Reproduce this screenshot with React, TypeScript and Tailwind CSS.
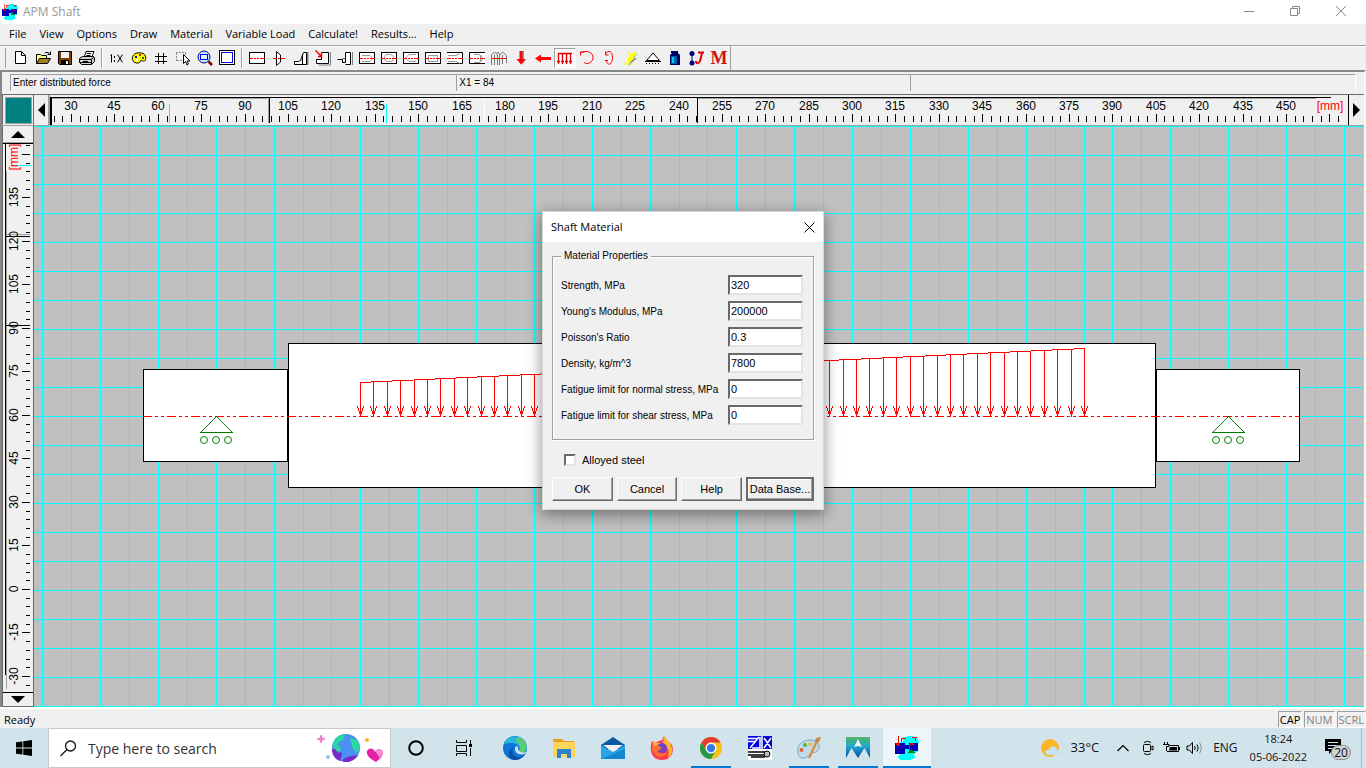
import { useState } from "react";
import type { ReactNode } from "react";
import clsx from "clsx";

const PX_PER_MM_X = 2.8925;
const PX_PER_MM_Y = 2.9;

const range = (from: number, to: number, step: number): number[] => {
  const out: number[] = [];
  for (let v = from; v <= to; v += step) {
    out.push(v);
  }
  return out;
};

const canvasX = (mm: number) => Math.round(8.2 + (mm - 20) * PX_PER_MM_X);
const canvasY = (mm: number) => Math.round(289.9 - (mm - 60) * PX_PER_MM_Y);

interface ToolIcon {
  name: string;
  art: ReactNode;
  pressed?: boolean;
}

const axis = <path d="M0 8h4v1H0zM5 8h2v1H5zM8 8h2v1H8zM11 8h5v1h-5z" fill="#f00" />;

const frame = (
  <rect x="0.5" y="2.5" width="15" height="11" fill="#fff" stroke="#000" />
);

const fileTools: ToolIcon[] = [
  {
    name: "New",
    art: <path d="M2.5 1.5h6l4 4v8h-10zM8.5 1.5v4h4" fill="#fff" stroke="#000" />,
  },
  {
    name: "Open",
    art: (
      <>
        <path d="M1.5 13.5v-9h4l1 1h5v3" fill="#ffff80" stroke="#000" />
        <path d="M1.5 13.5l3-5h11l-3 5z" fill="#a08020" stroke="#000" />
        <path d="M9.5 3.5l1-1h3l1 2M12.5 4.5h3v-3" fill="none" stroke="#000" />
      </>
    ),
  },
  {
    name: "Save",
    art: (
      <>
        <path d="M1.5 1.5h13v13h-12l-1-1z" fill="#804000" stroke="#000" />
        <rect x="4" y="2" width="8" height="6" fill="#f0f0f0" />
        <rect x="4" y="10" width="8" height="4" fill="#000" />
        <rect x="9" y="11" width="2" height="3" fill="#f0f0f0" />
      </>
    ),
  },
  {
    name: "Print",
    art: (
      <>
        <path d="M5.5 6.5l1.5-5h8l-2 5" fill="#fff" stroke="#000" />
        <path d="M8 3.5h4M7.5 5.5h4" stroke="#000" />
        <path d="M0.5 8.5l3-2h11l1 1v4l-3 3h-10l-2-2z" fill="#d0d0d0" stroke="#000" />
        <path d="M1 9.5h11l3-2M1 12.5h11M12.5 9.5v5M4 11.5h5" fill="none" stroke="#000" />
      </>
    ),
  },
];

const viewTools: ToolIcon[] = [
  {
    name: "Scale 1:X",
    art: (
      <path
        d="M1.5 5.5l1-1v8M5.5 6v2M5.5 10v2M8.5 4.5l5 8M13.5 4.5l-5 8"
        fill="none"
        stroke="#000"
      />
    ),
  },
  {
    name: "Colors",
    art: (
      <>
        <path
          d="M1.5 9.5c-1-5 4-7.5 8-6.5 4 0 6 3 5 6.5-1 3-3 1-4.5 1s0 2-2.5 2.5-5.5-1-6-3.5z"
          fill="#ffff00"
          stroke="#000"
        />
        <rect x="4" y="6" width="2" height="2" fill="#00f" />
        <rect x="8" y="4" width="2" height="2" fill="#f00" />
        <rect x="11" y="7" width="2" height="2" fill="#008000" />
        <rect x="5" y="9" width="2" height="2" fill="#fff" />
      </>
    ),
  },
  {
    name: "Grid",
    art: <path d="M5.5 3v11M10.5 3v11M2 6.5h12M2 11.5h12" stroke="#000" />,
  },
  {
    name: "Select",
    art: (
      <>
        <path d="M1 2.5h10M1.5 3v8M2 10.5h5M10.5 3v3" stroke="#909090" strokeDasharray="2 1" />
        <path d="M8.5 4.5v9l2-2 1.5 3.5 1.5-1-1.5-3h3z" fill="#fff" stroke="#000" />
      </>
    ),
  },
  {
    name: "Zoom window",
    art: (
      <>
        <circle cx="7" cy="7" r="6" fill="#c0e8ff" stroke="#000080" />
        <rect x="3.5" y="4.5" width="7" height="5" fill="#e0f0ff" stroke="#00f" />
        <path d="M11.5 11.5l3.5 3.5" stroke="#800000" strokeWidth="2.5" />
      </>
    ),
  },
  {
    name: "Zoom all",
    art: (
      <>
        <rect x="0.5" y="0.5" width="15" height="14" fill="#fff" stroke="#000" />
        <rect x="2.5" y="2.5" width="11" height="10" fill="#fff" stroke="#00f" />
      </>
    ),
  },
];

const drawTools: ToolIcon[] = [
  {
    name: "Cylinder",
    art: (
      <>
        {frame}
        {axis}
      </>
    ),
  },
  {
    name: "Cone",
    art: (
      <>
        <path d="M5.5 1.5l4 3.5v7l-4 3.5z" fill="#fff" stroke="#000" />
        <path d="M2 8h4v1H2zM7 8h2v1H7zM10 8h4v1h-4z" fill="#f00" />
      </>
    ),
  },
  {
    name: "Fillet",
    art: (
      <>
        <path d="M14.5 2v13" stroke="#808080" strokeWidth="2" />
        <path d="M1.5 14.5v-3h4q3 0 3-4l2-5h3v12z" fill="#fff" stroke="#000" />
        <path d="M9.5 4v11" stroke="#000" />
      </>
    ),
  },
  {
    name: "Chamfer",
    art: (
      <>
        <path d="M15.5 2v13h-12" stroke="#808080" fill="none" />
        <path d="M1.5 13.5v-4h5v-7h7v11z" fill="#fff" stroke="#000" />
        <path d="M0.5 0.5l6 6M3 6.5h3.5v-4" stroke="#f00" strokeWidth="1.5" fill="none" />
      </>
    ),
  },
  {
    name: "Groove",
    art: (
      <>
        <path d="M15.5 2v13" stroke="#808080" />
        <path d="M0.5 9.5h5v3h3v-10h5v12h-5" fill="#fff" stroke="#000" />
        <path d="M5 8.5h3" stroke="#808080" />
      </>
    ),
  },
  {
    name: "Keyway 1",
    art: (
      <>
        {frame}
        <path d="M3 5.5h8l2 2v2l-2 2H3" fill="none" stroke="#999" />
        {axis}
      </>
    ),
  },
  {
    name: "Keyway 2",
    art: (
      <>
        {frame}
        <rect x="3.5" y="4.5" width="9" height="7" rx="3" fill="none" stroke="#999" />
        {axis}
      </>
    ),
  },
  {
    name: "Keyway 3",
    art: (
      <>
        {frame}
        <path d="M13 4.5H6l-3 3v1l3 3h7" fill="none" stroke="#999" />
        {axis}
      </>
    ),
  },
  {
    name: "Keyway 4",
    art: (
      <>
        {frame}
        <rect x="3.5" y="5.5" width="9" height="6" fill="none" stroke="#999" />
        {axis}
      </>
    ),
  },
  {
    name: "Splines",
    art: (
      <>
        <path d="M0 2.5h15.5v11H0" fill="#fff" stroke="#000" />
        <path d="M1 5.5h8l4-2M1 11.5h8l4 2" fill="none" stroke="#999" />
        {axis}
      </>
    ),
  },
  {
    name: "Thread",
    art: (
      <>
        <path d="M16 2.5H0.5v11H16" fill="#fff" stroke="#000" />
        <path d="M5 4.5h5l3 2v4l-3 2H5M11.5 5v7" fill="none" stroke="#999" />
        {axis}
      </>
    ),
  },
  {
    name: "Hole",
    art: (
      <>
        <path
          d="M0.5 15V5l3-3 3 3v10M8.5 15V5l3-3 4 3.5V13M3.5 5v10M11.5 5v9M5 4l2-2 2 3"
          fill="none"
          stroke="#777"
        />
        <path d="M1 8h14v1H1z" fill="#f00" />
      </>
    ),
  },
  {
    name: "Radial force",
    art: (
      <>
        <path d="M8 1h3v8h2l-3.5 6z" fill="#909090" />
        <path d="M6.5 1h3v8h3L8 14.5 3.5 9h3z" fill="#f00" />
      </>
    ),
  },
  {
    name: "Axial force",
    art: <path d="M0 8.5l6-4V7h10v3H6v2.5z" fill="#f00" />,
  },
  {
    name: "Distributed force",
    pressed: true,
    art: (
      <path
        d="M1 3.5h14M1.5 3v11M5.5 3v11M9.5 3v11M13.5 3v11M0 11.5h3M4 11.5h3M8 11.5h3M12 11.5h3"
        stroke="#e00000"
        strokeWidth="1.3"
        fill="none"
      />
    ),
  },
  {
    name: "Bending moment",
    art: <path d="M1.5 5.5V2h4M2 2.5c8-3 12 1 12 5s-5 8-9 5" fill="none" stroke="#f00" />,
  },
  {
    name: "Torque",
    art: (
      <path d="M4.5 4c3-5 7-2 7 3s-2 8-4 7-2-2-2-4M4 10.5h3M4.5 1.5V5h3" fill="none" stroke="#f00" />
    ),
  },
  {
    name: "Spark",
    art: (
      <>
        <path d="M15 2l-4 6h3l-9 8 4-7z" fill="#888" />
        <path d="M4 1l4 3 5-3-1 5-4 1 4 1-9 7 2-6H3l4-3z" fill="#ffff00" />
        <path d="M1 14h3M7 14h3" stroke="#ffff00" />
      </>
    ),
  },
  {
    name: "Support",
    art: (
      <>
        <path d="M8 3L1.5 10.5h13z" fill="#fff" stroke="#000" />
        <path d="M0 11.5h16" stroke="#000" />
        <path d="M1 13.5h14" stroke="#000" strokeDasharray="1 2" />
      </>
    ),
  },
  {
    name: "Material",
    art: (
      <>
        <path d="M4 1h7v2H4zM3 5l2-2h6l2 2v10H3z" fill="#000060" />
        <rect x="4" y="6" width="6" height="8" fill="#0060b0" />
        <rect x="5" y="7" width="2" height="6" fill="#00d0e0" />
      </>
    ),
  },
  {
    name: "Joints",
    art: (
      <>
        <path d="M3 3v10" stroke="#000080" />
        <circle cx="3" cy="3.5" r="2.5" fill="#000080" />
        <circle cx="3" cy="13" r="2.5" fill="#000080" />
        <path d="M9 2.5h6M13 3l-2 8c-1 3-4 3-4 0" fill="none" stroke="#e00000" strokeWidth="2" />
      </>
    ),
  },
];

const menuItems = [
  "File",
  "View",
  "Options",
  "Draw",
  "Material",
  "Variable Load",
  "Calculate!",
  "Results...",
  "Help",
];

const AppIcon = ({ className }: { className: string }) => (
  <svg viewBox="0 0 24 24" className={className} shapeRendering="crispEdges">
    <path d="M8 1l8-1 6 2 2 4-2 4 1 5-4 3 1 4-5 2H5l-3-3 3-3-3-3V7l6-1z" fill="#0ff" />
    <path d="M0 7h10v2h4V7h9v8h-8v-2h-5v5H0z" fill="#0000c0" />
    <path d="M0 9.5h9M1 13.5h9M1 17.5h8M14 10.5h8" stroke="#000080" />
    <path d="M3 0v10M1 7l2 3 2-3M6.5 6V2H11M14 16c0-9 2-11 5-6M20.5 5V1M17 1.5h5" fill="none" stroke="#f00" />
    <path d="M16 13l4 4h-8z" fill="#008000" />
  </svg>
);

function ToolGroup({ tools }: { tools: ToolIcon[] }) {
  return (
    <div className="flex">
      {tools.map((tool) => (
        <button
          key={tool.name}
          aria-label={tool.name}
          className={clsx(
            "flex h-5 w-[22px] items-center justify-center border",
            tool.pressed
              ? "border-t-[#a0a0a0] border-r-white border-b-white border-l-[#a0a0a0] bg-[#f8f8f8]"
              : "border-transparent"
          )}
        >
          <svg viewBox="0 0 16 16" className="h-4 w-4 shrink-0">
            {tool.art}
          </svg>
        </button>
      ))}
    </div>
  );
}

const ToolSeparator = () => (
  <div className="mx-[3px] h-5 w-[2px] border-r border-l border-r-white border-l-[#a0a0a0]" />
);

function HorizontalRuler() {
  const x = (mm: number) => Math.round(21.1 + (mm - 30) * PX_PER_MM_X);
  return (
    <svg className="h-full min-w-0 flex-1 bg-[#f0f0f0]" shapeRendering="crispEdges">
      <path d="M0 2.5h1281" stroke="#000" />
      <path d="M2 3.5h215M648 3.5h618" stroke="#a0a0a0" />
      <path d="M1 2v28" stroke="#000" strokeWidth="2" />
      <path d="M219.5 3v25M647.5 3v25" stroke="#000" />
      <path d="M218.5 3v25" stroke="#a0a0a0" />
      <path d="M434.5 4v22" stroke="#fff" />
      <path d="M119.5 9v19M336.5 9v19" stroke="#0ff" />
      {range(24, 468, 3).map((mm) => (
        <rect
          key={mm}
          x={x(mm)}
          y={mm % 15 === 0 ? 19 : 21}
          width="1"
          height={mm % 15 === 0 ? 8 : 6}
        />
      ))}
      {range(30, 450, 15).map((mm) => (
        <text key={mm} x={x(mm)} y="15" textAnchor="middle" className="text-[12px]">
          {mm}
        </text>
      ))}
      <text x="1280" y="15" textAnchor="middle" className="fill-[#f00] text-[12px]">
        [mm]
      </text>
    </svg>
  );
}

function VerticalRuler() {
  const y = (mm: number) => canvasY(mm) - 18;
  return (
    <svg className="min-h-0 w-full flex-1 bg-[#f0f0f0]" shapeRendering="crispEdges">
      <path d="M0 0.5h30M2.5 0v532" stroke="#000" />
      <path d="M3.5 28v518" stroke="#a0a0a0" />
      <path d="M3 93.5h24M3 182.5h24" stroke="#000" />
      <path d="M3 91.5h24" stroke="#a0a0a0" />
      <path d="M12 22.5h16" stroke="#0ff" />
      {range(-33, 153, 3).map((mm) => (
        <rect
          key={mm}
          x={mm % 15 === 0 ? 19 : 23}
          y={y(mm)}
          width={mm % 15 === 0 ? 8 : 4}
          height="1"
        />
      ))}
      {range(-30, 135, 15).map((mm) => (
        <text
          key={mm}
          transform={`translate(15 ${y(mm)}) rotate(-90)`}
          textAnchor="middle"
          className="text-[12px]"
        >
          {mm}
        </text>
      ))}
      <text
        transform="translate(15 14) rotate(-90)"
        textAnchor="middle"
        className="fill-[#f00] text-[12px]"
      >
        [mm]
      </text>
    </svg>
  );
}

const RollerSupport = ({ x }: { x: number }) => (
  <g stroke="#008000" fill="none">
    <path d={`M${x + 0.5} 290.5l-16 16h32z`} />
    {[-12, 0, 12].map((dx) => (
      <circle key={dx} cx={x + dx} cy="314" r="3.5" shapeRendering="auto" />
    ))}
  </g>
);

function ShaftDrawing() {
  // Distributed load rises linearly from the first arrow to the last
  const arrows = range(0, 54, 1).map((i) => ({
    x: Math.round(326 + (i * 724) / 54),
    top: Math.round(256 - (i * 34) / 54),
  }));

  return (
    <svg className="min-h-0 w-full flex-1 bg-[#c0c0c0]" shapeRendering="crispEdges">
      {range(20, 900, 10).map((mm) => (
        <rect key={`v${mm}`} x={canvasX(mm)} y="0" width="1" height="100%" fill="#0ff" />
      ))}
      {range(-200, 160, 10).map((mm) => (
        <rect key={`h${mm}`} x="0" y={canvasY(mm)} width="100%" height="1" fill="#0ff" />
      ))}
      <g fill="#fff" stroke="#000">
        <rect x="109.5" y="243.5" width="144" height="92" />
        <rect x="254.5" y="217.5" width="867" height="144" />
        <rect x="1122.5" y="243.5" width="143" height="92" />
      </g>
      <path d="M109 290.5h1157" stroke="#f00" strokeDasharray="9 3 3 3 3 3" />
      <g stroke="#f00" fill="none">
        <path d="M326.5 256.5L1050.5 222.5" />
        {arrows.map((a) => (
          <path
            key={a.x}
            d={`M${a.x + 0.5} ${a.top}V291M${a.x - 2.5} 280.5l3 9l3 -9`}
          />
        ))}
      </g>
      <RollerSupport x={182} />
      <RollerSupport x={1194} />
    </svg>
  );
}

const initialFields = [
  { id: "strength", label: "Strength, MPa", value: "320" },
  { id: "young", label: "Young's Modulus, MPa", value: "200000" },
  { id: "poisson", label: "Poisson's Ratio", value: "0.3" },
  { id: "density", label: "Density, kg/m^3", value: "7800" },
  { id: "normal", label: "Fatigue limit for normal stress, MPa", value: "0" },
  { id: "shear", label: "Fatigue limit for shear stress, MPa", value: "0" },
];

function MaterialDialog() {
  const [fields, setFields] = useState(initialFields);
  const [alloyed, setAlloyed] = useState(false);

  const updateField = (id: string, value: string) => {
    setFields((prev) => prev.map((f) => (f.id === id ? { ...f, value } : f)));
  };

  return (
    <div
      role="dialog"
      aria-label="Shaft Material"
      className="absolute top-[211px] left-1/2 w-[282px] -translate-x-1/2 border border-[#d8d8d8] bg-[#f0f0f0] text-[11px] shadow-[0_4px_14px_1px_rgba(0,0,0,0.4)]"
    >
      <div className="flex h-[30px] items-center justify-between bg-white px-2 font-['Open_Sans',sans-serif]">
        <h2>Shaft Material</h2>
        <button aria-label="Close">
          <svg viewBox="0 0 11 11" className="h-[11px] w-[11px]">
            <path d="M0.5 0.5l10 10M10.5 0.5l-10 10" stroke="#000" />
          </svg>
        </button>
      </div>
      <div className="px-[9px] pt-[6px] pb-2">
        <fieldset className="min-w-0 border border-[#a0a0a0] pr-[10px] pb-[14px] pl-2 text-[10px] shadow-[1px_1px_0_#fff,inset_1px_1px_0_#fff]">
          <legend className="px-[3px] leading-4">Material Properties</legend>
          <div className="flex flex-col gap-[6px] pt-[11px]">
            {fields.map((field) => (
              <div key={field.id} className="flex items-center justify-between">
                <label htmlFor={field.id} className="whitespace-nowrap">
                  {field.label}
                </label>
                <input
                  id={field.id}
                  value={field.value}
                  onChange={(e) => updateField(field.id, e.target.value)}
                  className="h-5 w-[75px] shrink-0 border-2 border-t-[#696969] border-r-[#e3e3e3] border-b-[#e3e3e3] border-l-[#696969] bg-white px-[1px] text-[11px] outline-none"
                />
              </div>
            ))}
          </div>
        </fieldset>
        <label className="mt-3 ml-3 flex h-4 items-center gap-[6px]">
          <input
            type="checkbox"
            checked={alloyed}
            onChange={(e) => setAlloyed(e.target.checked)}
            className="h-3 w-3 appearance-none border-2 border-t-[#696969] border-r-[#e3e3e3] border-b-[#e3e3e3] border-l-[#696969] bg-white checked:bg-black"
          />
          Alloyed steel
        </label>
        <div className="mt-[9px] flex gap-1">
          {["OK", "Cancel", "Help"].map((name) => (
            <button
              key={name}
              className="h-6 flex-1 border border-t-white border-r-[#696969] border-b-[#696969] border-l-white shadow-[inset_-1px_-1px_0_#a0a0a0]"
            >
              {name}
            </button>
          ))}
          <button className="h-6 w-[68px] border-2 border-[#696969] whitespace-nowrap shadow-[inset_-1px_-1px_0_#a0a0a0,inset_1px_1px_0_#fff]">
            Data Base...
          </button>
        </div>
      </div>
    </div>
  );
}

interface TaskbarApp {
  name: string;
  underline?: boolean;
  active?: boolean;
  art: ReactNode;
}

const taskbarApps: TaskbarApp[] = [
  {
    name: "Edge",
    art: (
      <svg viewBox="0 0 24 24" className="h-6 w-6">
        <circle cx="12" cy="12" r="12" fill="#0c78d8" />
        <path d="M1 8C4-2 20-2 23 8c3 7-2 10-8 9 4-6-1-10-6-10-4 0-7 1-8 1z" fill="#25b8d8" />
        <path d="M15 1c9 3 11 12 6 15-2 1-5 1-6 0 4-5 2-9-3-12z" fill="#5ccb78" />
        <path d="M11 11c-2 1-3 8 3 10 4 1 6-1 7-3-1 4-6 6-10 6-7-1-7-10 0-13z" fill="#0a4fa4" />
        <path d="M12 13c0-4 4-3 3 0 0 3 4 4 9 3-3 4-12 3-12-3z" fill="#d3e4eb" />
      </svg>
    ),
  },
  {
    name: "File Explorer",
    art: (
      <svg viewBox="0 0 24 24" className="h-6 w-6">
        <path d="M1 3h9l2 2h10v16H1z" fill="#e8a020" />
        <path d="M1 6h22v15H1z" fill="#ffd45a" />
        <path d="M5 13h14v9h-4v-4H9v4H5z" fill="#2a82d0" />
      </svg>
    ),
  },
  {
    name: "Mail",
    art: (
      <svg viewBox="0 0 24 24" className="h-6 w-6">
        <path d="M0 9l12-8 12 8v4H0z" fill="#0a57a5" />
        <path d="M2 9h20l-10 7z" fill="#f2f2f2" />
        <path d="M0 9l12 7 12-7v14H0z" fill="#25a5e8" />
        <path d="M0 23l24-10v10z" fill="#1187d0" />
      </svg>
    ),
  },
  {
    name: "Firefox",
    art: (
      <svg viewBox="0 0 24 24" className="h-6 w-6">
        <path d="M2 5l3 2 4-2 3-1 2-4 3 4 5 5c2 5 1 15-10 15S-1 13 2 5z" fill="#ff3850" />
        <path d="M3 5l4 2 6 0 1-7 4 5c6 6 5 14 0 17 2-8-1-13-6-15L3 12z" fill="#ffb82a" />
        <circle cx="12" cy="12" r="5" fill="#7540c8" />
        <path d="M2 11c5-3 7-1 10 1-2 1-3 3-5 3 2 4 7 3 10 1-3 9-14 6-15-5z" fill="#ff7030" />
      </svg>
    ),
  },
  {
    name: "Chrome",
    underline: true,
    art: (
      <svg viewBox="0 0 24 24" className="h-[22px] w-[22px]">
        <circle cx="12" cy="12" r="12" fill="#fbc116" />
        <path d="M1.6 6A12 12 0 0 1 22.4 6H12a6 6 0 0 0-5 9z" fill="#e33b2e" />
        <path d="M1.6 6A12 12 0 0 0 12 24l5-9a6 6 0 0 1-10 0z" fill="#279847" />
        <circle cx="12" cy="12" r="6" fill="#fff" />
        <circle cx="12" cy="12" r="4.5" fill="#3478e5" />
      </svg>
    ),
  },
  {
    name: "Drawing tool",
    art: (
      <svg viewBox="0 0 24 24" className="h-6 w-6">
        <path d="M0 0h24v24H0z" fill="#fff" />
        <path d="M0 0h24v13H0z" fill="#0000e0" />
        <path d="M0 2.5h10M0 5.5h8M11 1L2 12M12 1v11H4M16 2l7 10M23 2l-7 10M14 0v13" stroke="#fff" strokeWidth="1.5" fill="none" />
        <path d="M0 16h17M0 19h16M3 21h14" stroke="#000" strokeWidth="1.5" />
        <circle cx="19" cy="18" r="3" fill="#bbb" stroke="#000" />
      </svg>
    ),
  },
  {
    name: "Paint",
    underline: true,
    art: (
      <svg viewBox="0 0 24 24" className="h-6 w-6">
        <path d="M1 17C-1 9 6 4 13 4c8 0 11 5 8 10-3 4-6 2-8 4s-3 4-7 4-4-2-5-5z" fill="#c0dcea" stroke="#78a8c0" />
        <circle cx="8" cy="9" r="2" fill="#58b058" />
        <circle cx="13" cy="8" r="2" fill="#f0c040" />
        <circle cx="4.5" cy="14" r="2" fill="#e06040" />
        <path d="M12 22l8-17" stroke="#d8924a" strokeWidth="2.5" />
        <path d="M18 6l1-4 5-1-2 5z" fill="#c08850" />
      </svg>
    ),
  },
  {
    name: "APM",
    underline: true,
    art: (
      <svg viewBox="0 0 24 24" className="h-6 w-6">
        <defs>
          <linearGradient id="apm" x1="0" y1="0" x2="0" y2="1">
            <stop offset="0" stopColor="#58b868" />
            <stop offset="0.15" stopColor="#40b080" />
            <stop offset="0.45" stopColor="#20a8d0" />
            <stop offset="1" stopColor="#08489c" />
          </linearGradient>
        </defs>
        <path d="M0 1h24v21l-5.5-10L12 22 5.5 12 0 22z" fill="url(#apm)" />
        <path d="M12 3l4 8-4-1-4 1z" fill="#e8f2f6" />
      </svg>
    ),
  },
  {
    name: "APM Shaft",
    underline: true,
    active: true,
    art: <AppIcon className="h-6 w-6" />,
  },
];

function Taskbar() {
  return (
    <footer className="flex h-10 shrink-0 bg-[#d2e4eb] font-['Open_Sans',sans-serif]">
      <button aria-label="Start" className="flex w-12 items-center justify-center">
        <svg viewBox="0 0 16 16" className="h-4 w-4">
          <path d="M0 2.3l6.5-.9v6.2H0zM7.3 1.2L16 0v7.6H7.3zM0 8.4h6.5v6.2L0 13.7zM7.3 8.4H16V16l-8.7-1.2z" />
        </svg>
      </button>
      <label className="mr-px flex w-[343px] items-center border border-[#c8c8c8] bg-white pr-[6px] pl-[11px]">
        <svg viewBox="0 0 17 17" className="h-[17px] w-[17px] shrink-0">
          <circle cx="10.5" cy="6" r="5" fill="none" stroke="#111" strokeWidth="1.3" />
          <path d="M7 9.5L0.5 16" stroke="#111" strokeWidth="1.3" />
        </svg>
        <input
          aria-label="Search"
          placeholder="Type here to search"
          className="ml-[11px] min-w-0 flex-1 text-[14px] outline-none placeholder:text-[#333]"
        />
        <svg viewBox="0 0 68 30" className="h-[30px] w-[68px] shrink-0">
          <path d="M5 2l1 3 3 1-3 1-1 3-1-3-3-1 3-1z" fill="#f080d0" stroke="#f080d0" />
          <circle cx="12" cy="24" r="2" fill="#80c8f0" />
          <circle cx="51" cy="7" r="2" fill="#ffb020" />
          <circle cx="30" cy="15" r="14" fill="#4a90f0" />
          <path d="M16 16c3 0 8 1 10 5l-2 7c-5-2-8-6-8-12zM26 28c3-4 8-5 16-6-3 5-10 9-16 6z" fill="#7a28c8" />
          <path d="M17 11c1-6 7-10 12-10l-2 6-6 4 4 5-2 4-6-6zM34 5l7 2 3 6-3 8-5-7z" fill="#28d8a0" />
          <path d="M60 29c-6-3-10-7-9-11 2-4 7-3 8 1 2-4 7-3 8 0 0 4-3 7-7 10z" fill="#e820a8" />
          <path d="M59 18c3-3 8-2 8 2l-3 5z" fill="#f890d0" />
        </svg>
      </label>
      <button aria-label="Cortana" className="flex w-12 items-center justify-center">
        <svg viewBox="0 0 16 16" className="h-4 w-4">
          <circle cx="8" cy="8" r="6.8" fill="none" stroke="#000" strokeWidth="2" />
        </svg>
      </button>
      <button aria-label="Task View" className="mr-[3px] flex w-12 items-center justify-center">
        <svg viewBox="0 0 16 16" className="h-4 w-4">
          <path d="M0.5 0v2.5h10V0M0.5 5.5h10v6h-10zM0.5 16v-2.5h10V16M14.5 0v4M14.5 8v8" fill="none" stroke="#000" />
          <path d="M13 4h3v3h-3z" />
        </svg>
      </button>
      <div className="flex gap-px">
        {taskbarApps.map((app) => (
          <button
            key={app.name}
            aria-label={app.name}
            className={clsx(
              "relative flex w-12 items-center justify-center",
              app.active && "bg-[#eef5f8]"
            )}
          >
            {app.art}
            {app.underline && (
              <span
                className={clsx(
                  "absolute bottom-0 h-[2px] bg-[#0078d7]",
                  app.active ? "inset-x-0" : "inset-x-1"
                )}
              />
            )}
          </button>
        ))}
      </div>
      <div className="ml-auto flex items-center text-[11px] text-[#111]">
        <svg viewBox="0 0 20 20" className="h-5 w-5">
          <circle cx="9" cy="10" r="9" fill="#fbb52a" />
          <path d="M7 17c-4-1-3-6 1-5 1-5 8-5 8 0 5 0 5 5 1 5z" fill="#c4e2f4" />
        </svg>
        <span className="ml-[10px] text-[13px]">33°C</span>
        <svg viewBox="0 0 12 8" className="ml-[18px] h-2 w-3">
          <path d="M0.5 7L6 1.5 11.5 7" fill="none" stroke="#000" strokeWidth="1.2" />
        </svg>
        <svg viewBox="0 0 14 16" className="ml-3 h-4 w-[14px]">
          <rect x="2.5" y="4.5" width="7" height="7" rx="1" fill="none" stroke="#000" />
          <path d="M9.5 7.5l2.5-1.5v4L9.5 8.5M3 2.5q4-2.5 7 0M3 13.5q4 2.5 7 0" fill="none" stroke="#000" />
        </svg>
        <svg viewBox="0 0 17 12" className="ml-2 h-3 w-[17px]">
          <path d="M1.5 0v2M4.5 0v2M0 2.5h6v2H3.5V9" fill="none" stroke="#000" />
          <path d="M6 3.5h9.5v6H4" fill="none" stroke="#000" />
          <path d="M7 5h7v3.5H6zM16 5h1v3h-1z" />
        </svg>
        <svg viewBox="0 0 17 14" className="ml-[6px] h-[14px] w-[17px]">
          <path d="M1 5h2.5l3-3.5v11L3.5 9H1zM8.5 5q1.5 2 0 4M11 3.5q2.5 3.5 0 7" fill="none" stroke="#000" />
          <path d="M13.5 1.5q3.5 5.5 0 11" fill="none" stroke="#888" />
        </svg>
        <span className="ml-[10px] text-[12px]">ENG</span>
        <div className="ml-3 text-center leading-[18px]">
          <div>18:24</div>
          <div>05-06-2022</div>
        </div>
        <button aria-label="Notifications" className="relative ml-[18px] h-6 w-7">
          <svg viewBox="0 0 28 24" className="h-6 w-7">
            <path d="M0 3h16v12H7l-3 3v-3H0z" />
            <path d="M3 6.5h10M3 9.5h10M3 12.5h7" stroke="#d2e4eb" />
            <rect x="6.5" y="9.5" width="19" height="14" rx="7" fill="#ccd2d6" stroke="#888" />
          </svg>
          <span className="absolute top-[9px] left-[6px] w-5 text-center text-[12px] leading-4">
            20
          </span>
        </button>
        <div className="mr-[4px] ml-[8px] h-10 w-px bg-[#a8b8c0]" />
      </div>
    </footer>
  );
}

export default function App() {
  return (
    <div className="relative flex h-screen w-full flex-col overflow-hidden bg-[#f0f0f0] font-['Liberation_Sans',Arial,sans-serif] text-black">
      <header className="flex h-6 shrink-0 items-center bg-white pr-5 pl-[2px] font-['Open_Sans',sans-serif] text-[12px] text-[#999]">
        <AppIcon className="h-4 w-4" />
        <h1 className="ml-[5px]">APM Shaft</h1>
        <div className="ml-auto flex items-center gap-9 pb-[3px]">
          <button aria-label="Minimize">
            <svg viewBox="0 0 10 10" className="h-[10px] w-[10px]">
              <path d="M0 5.5h10" stroke="#888" />
            </svg>
          </button>
          <button aria-label="Restore">
            <svg viewBox="0 0 10 10" className="h-[10px] w-[10px]">
              <path d="M0.5 2.5h7v7h-7zM2.5 2.5v-2h7v7h-2" fill="none" stroke="#888" />
            </svg>
          </button>
          <button aria-label="Close window">
            <svg viewBox="0 0 10 10" className="h-[10px] w-[10px]">
              <path d="M0 0l10 10M10 0L0 10" stroke="#888" />
            </svg>
          </button>
        </div>
      </header>

      <nav className="flex h-[22px] shrink-0 items-center gap-[13px] border-b border-[#a0a0a0] pl-[9px] font-['Open_Sans',sans-serif] text-[11px]">
        {menuItems.map((item) => (
          <button key={item}>{item}</button>
        ))}
      </nav>

      {/* Toolbar */}
      <div className="flex h-6 shrink-0 items-center border-t border-white pb-[2px]">
        <div className="mx-1 h-5 w-[2px] border-r border-[#a0a0a0]" />
        <ToolGroup tools={fileTools} />
        <ToolSeparator />
        <ToolGroup tools={viewTools} />
        <ToolSeparator />
        <ToolGroup tools={drawTools} />
        <button
          aria-label="Moments"
          className="h-5 w-[22px] text-center font-['Liberation_Serif',serif] text-[18px] leading-5 font-bold text-[#d01010]"
        >
          M
        </button>
        <div className="h-6 w-px bg-[#a0a0a0]" />
      </div>

      <div className="flex min-h-0 flex-1 flex-col border-t-2 border-r-2 border-l-2 border-t-[#888] border-r-[#f8f8f8] border-l-[#888]">
        {/* Hint line */}
        <div className="grid h-[23px] shrink-0 grid-cols-[447fr_454fr_447fr] border-b border-[#696969] px-2 pt-[2px] pb-[3px] text-[10px] leading-4">
          <div className="border-t border-l border-[#a0a0a0] pl-[2px]">
            Enter distributed force
          </div>
          <div className="border-t border-l border-[#a0a0a0] pl-[2px]">X1 = 84</div>
          <div className="border-t border-r border-l border-t-[#a0a0a0] border-r-white border-l-[#a0a0a0]" />
        </div>

        <div className="flex h-[31px] shrink-0 border-b border-[#a0a0a0]">
          <div className="flex w-8 items-center justify-center border-r border-l border-[#696969]">
            <div className="h-[27px] w-[27px] border border-[#a0a0a0] bg-[#008080]" />
          </div>
          <button
            aria-label="Scroll left"
            className="flex w-4 items-center justify-center border-r-2 border-[#a0a0a0]"
          >
            <svg viewBox="0 0 7 14" className="h-[14px] w-[7px]">
              <path d="M7 0v14L0 7z" />
            </svg>
          </button>
          <HorizontalRuler />
          <button
            aria-label="Scroll right"
            className="flex w-4 items-center justify-center border-l border-black"
          >
            <svg viewBox="0 0 7 14" className="h-[14px] w-[7px]">
              <path d="M0 0v14l7-7z" />
            </svg>
          </button>
        </div>

        <div className="flex min-h-0 flex-1">
          <div className="flex w-8 shrink-0 flex-col border-r border-l border-[#696969]">
            <button
              aria-label="Scroll up"
              className="flex h-[17px] items-center justify-center border-b border-[#a0a0a0]"
            >
              <svg viewBox="0 0 14 7" className="h-[7px] w-[14px]">
                <path d="M7 0l7 7H0z" />
              </svg>
            </button>
            <VerticalRuler />
            <button
              aria-label="Scroll down"
              className="flex h-[15px] items-center justify-center border-t border-b border-t-black border-b-[#696969]"
            >
              <svg viewBox="0 0 14 7" className="h-[7px] w-[14px]">
                <path d="M0 0h14L7 7z" />
              </svg>
            </button>
          </div>
          <main className="flex min-w-0 flex-1">
            <ShaftDrawing />
          </main>
        </div>
      </div>

      {/* Status bar */}
      <div className="flex h-[21px] shrink-0 border-t-2 border-white pl-1 font-['Open_Sans',sans-serif] text-[11px]">
        <span className="pt-[2px] leading-[18px]">Ready</span>
        <div className="ml-auto flex h-full gap-[2px] pt-[2px] leading-4">
          <span className="border border-t-[#a0a0a0] border-r-white border-b-white border-l-[#a0a0a0] px-px">
            CAP
          </span>
          <span className="border border-t-[#a0a0a0] border-r-white border-b-white border-l-[#a0a0a0] px-px text-[#808080]">
            NUM
          </span>
          <span className="border border-t-[#a0a0a0] border-r-white border-b-white border-l-[#a0a0a0] px-px text-[#808080]">
            SCRL
          </span>
        </div>
      </div>

      <Taskbar />
      <MaterialDialog />
    </div>
  );
}
